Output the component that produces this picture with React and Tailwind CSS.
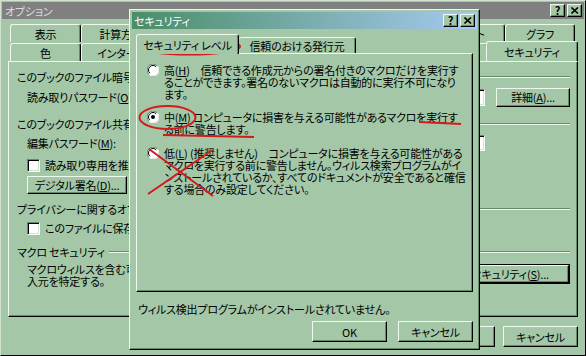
const raised =
  "border border-t-[#eef8ee] border-l-[#eef8ee] border-r-black border-b-black shadow-[inset_-1px_-1px_0_#688a6c]";
const sunken =
  "border border-t-[#688a6c] border-l-[#688a6c] border-r-white border-b-white shadow-[inset_1px_1px_0_#000,inset_-1px_-1px_0_#cfe3cf] bg-white";

const Btn = ({ className = "", children }) => (
  <div className={`${raised} bg-[#a3c7a7] flex items-center justify-center ${className}`}>{children}</div>
);

const Etched = ({ className = "" }) => (
  <div className={`h-[2px] border-t border-t-[#688a6c] border-b border-b-[#eef8ee] ${className}`} />
);

const Header = ({ children }) => (
  <div className="flex items-center h-[14px]">
    <span className="whitespace-nowrap pr-[4px]">{children}</span>
    <Etched className="flex-1" />
  </div>
);

const Check = () => <div className={`${sunken} w-[13px] h-[13px] shrink-0`} />;

const Radio = ({ checked }) => (
  <svg width="12" height="12" viewBox="0 0 12 12" className="shrink-0">
    <circle cx="6" cy="6" r="5.5" fill="white" />
    <path d="M1.8 10.2 A5.6 5.6 0 0 1 10.2 1.8" stroke="#688a6c" fill="none" />
    <path d="M2.8 9.2 A4.5 4.5 0 0 1 9.2 2.8" stroke="#000" fill="none" />
    <path d="M10.4 2.2 A5.6 5.6 0 0 1 2.2 10.4" stroke="#fff" fill="none" />
    {checked && <circle cx="6" cy="6" r="2" fill="black" />}
  </svg>
);

const Caption = () => (
  <div className="flex gap-[2px]">
    <Btn className="w-[15px] h-[13px] text-[11px] font-bold leading-none">?</Btn>
    <Btn className="w-[15px] h-[13px]">
      <svg width="8" height="7" viewBox="0 0 8 7">
        <path d="M0.5 0.5 L7 6.5 M7 0.5 L0.5 6.5" stroke="black" strokeWidth="1.6" />
      </svg>
    </Btn>
  </div>
);

const BackTab = ({ w, children, sel }) => (
  <div
    className={`flex items-center justify-center whitespace-nowrap overflow-hidden border-t border-l border-t-[#eef8ee] border-l-[#eef8ee] border-r border-r-black rounded-t-[3px] shadow-[inset_-1px_0_0_#688a6c] ${
      sel ? "h-[20px] -mx-[2px] relative z-10 bg-[#a3c7a7]" : "h-[18px]"
    }`}
    style={{ width: w }}
  >
    {children}
  </div>
);

export default function App() {
  return (
    <div className="relative w-[586px] h-[356px] overflow-hidden bg-[#a3c7a7] text-black text-[11px] leading-[12px] tracking-[-0.2px] font-['Noto_Sans_CJK_JP','Noto_Sans',sans-serif] [font-feature-settings:'palt'] border border-t-[#cfe3cf] border-l-[#cfe3cf] border-r-black border-b-black">
      {/* back window: オプション */}
      <div className="mx-[1px] mt-[1px] h-[17px] bg-[#808080] flex items-center justify-between pl-[3px] pr-[2px]">
        <span className="text-[#dcdcdc]">オプション</span>
        <Caption />
      </div>

      <div className="pl-[9px] mt-[5px] flex items-end">
        <BackTab w={71}>表示</BackTab>
        <BackTab w={80}>計算方法</BackTab>
        <BackTab w={70}>編集</BackTab>
        <BackTab w={70}>全般</BackTab>
        <BackTab w={73}>移行</BackTab>
        <BackTab w={131}>ユーザー設定リスト</BackTab>
        <BackTab w={70}>グラフ</BackTab>
      </div>
      <div className="pl-[9px] flex items-end h-[19px]">
        <BackTab w={71}>色</BackTab>
        <BackTab w={120}>インターナショナル</BackTab>
        <BackTab w={70}>保存</BackTab>
        <BackTab w={105}>エラー チェック</BackTab>
        <BackTab w={112}>スペル チェック</BackTab>
        <BackTab w={92} sel>
          セキュリティ
        </BackTab>
      </div>

      <div className={`mx-[7px] h-[256px] ${raised} pt-[8px] pl-[8px] pr-[7px] flex flex-col`}>
        <Header>このブックのファイル暗号化の設定</Header>
        <div className="mt-[3px] h-[20px] flex items-center">
          <span className="pl-[10px] whitespace-nowrap">
            読み取りパスワード(<u>O</u>):
          </span>
          <div className="flex-1" />
          <div className={`${sunken} w-[150px] h-[17px]`} />
          <Btn className="ml-[11px] w-[74px] h-[19px]">
            詳細(<u>A</u>)...
          </Btn>
        </div>
        <div className="mt-[10px]">
          <Header>このブックのファイル共有設定</Header>
        </div>
        <div className="mt-[3px] h-[18px] flex items-center">
          <span className="pl-[10px] whitespace-nowrap">
            編集パスワード(<u>M</u>):
          </span>
          <div className="flex-1" />
          <div className={`${sunken} w-[150px] h-[16px] mr-[85px]`} />
        </div>
        <div className="mt-[6px] h-[14px] flex items-center pl-[10px] gap-[5px]">
          <Check />
          <span className="whitespace-nowrap">
            読み取り専用を推奨する(<u>E</u>)
          </span>
        </div>
        <div className="mt-[4px] pl-[10px]">
          <Btn className="w-[100px] h-[18px] whitespace-nowrap">
            デジタル署名(<u>D</u>)...
          </Btn>
        </div>
        <div className="mt-[8px]">
          <Header>プライバシーに関するオプション</Header>
        </div>
        <div className="mt-[5px] h-[14px] flex items-center pl-[10px] gap-[5px]">
          <Check />
          <span className="whitespace-nowrap">
            このファイルに保存するときに個人情報を削除する(<u>R</u>)
          </span>
        </div>
        <div className="mt-[10px]">
          <Header>マクロ セキュリティ</Header>
        </div>
        <div className="mt-[4px] flex items-start">
          <div className="pl-[10px] flex-1 whitespace-nowrap">
            <div className="h-[12px]">マクロウィルスを含む可能性のあるファイルの</div>
            <div className="h-[12px]">入元を特定する。</div>
          </div>
          <div className="border border-black mt-[1px]">
            <Btn className="w-[150px] h-[18px] whitespace-nowrap">
              マクロ セキュリティ(<u>S</u>)...
            </Btn>
          </div>
        </div>
      </div>

      <div className="mt-[9px] flex justify-end gap-[8px] pr-[7px]">
        <Btn className="w-[75px] h-[21px]">OK</Btn>
        <Btn className="w-[75px] h-[21px]">キャンセル</Btn>
      </div>

      {/* front dialog: セキュリティ */}
      <div className={`absolute left-[128px] top-[8px] w-[351px] h-[341px] bg-[#a3c7a7] ${raised} p-[2px] flex flex-col`}>
        <div className="h-[17px] bg-gradient-to-r from-[#4a8d68] to-[#a6caf0] flex items-center justify-between pl-[2px] pr-[2px]">
          <span className="text-white">セキュリティ</span>
          <Caption />
        </div>

        <div className="px-[4px] flex flex-col">
          <div className="mt-[5px] flex items-end">
            <div className="relative z-10 w-[103px] h-[20px] flex items-center justify-center border-t border-l border-t-[#eef8ee] border-l-[#eef8ee] border-r border-r-black rounded-t-[3px] shadow-[inset_-1px_0_0_#688a6c] bg-[#a3c7a7] whitespace-nowrap">
              セキュリティ レベル
            </div>
            <div className="w-[117px] h-[17px] flex items-center justify-center border-t border-t-[#eef8ee] border-r border-r-black rounded-t-[3px] shadow-[inset_-1px_0_0_#688a6c] whitespace-nowrap">
              信頼のおける発行元
            </div>
          </div>
          <div className={`-mt-[1px] h-[239px] ${raised} pt-[10px] pl-[10px] flex flex-col whitespace-nowrap`}>
            <div className="flex gap-[5px]">
              <Radio />
              <div>
                <div className="h-[12px]">
                  高(<u>H</u>)　信頼できる作成元からの署名付きのマクロだけを実行す
                </div>
                <div className="h-[12px]">ることができます。署名のないマクロは自動的に実行不可になり</div>
                <div className="h-[12px]">ます。</div>
              </div>
            </div>
            <div className="mt-[11px] flex gap-[5px]">
              <Radio checked />
              <div>
                <div className="h-[12px]">
                  中(<u>M</u>) コンピュータに損害を与える可能性があるマクロを実行す
                </div>
                <div className="h-[12px]">る前に警告します。</div>
              </div>
            </div>
            <div className="mt-[12px] flex gap-[5px]">
              <Radio />
              <div>
                <div className="h-[12px]">
                  低(<u>L</u>) (推奨しません)　コンピュータに損害を与える可能性がある
                </div>
                <div className="h-[12px]">マクロを実行する前に警告しません。ウィルス検索プログラムがイ</div>
                <div className="h-[12px]">ンストールされているか、すべてのドキュメントが安全であると確信</div>
                <div className="h-[12px]">する場合のみ設定してください。</div>
              </div>
            </div>
          </div>
          <div className="mt-[11px] h-[12px] pl-[2px] whitespace-nowrap">
            ウィルス検出プログラムがインストールされていません。
          </div>
          <div className="mt-[6px] flex justify-end gap-[11px]">
            <Btn className="w-[75px] h-[21px]">OK</Btn>
            <Btn className="w-[75px] h-[21px]">キャンセル</Btn>
          </div>
        </div>
      </div>

      {/* red marks drawn over the screenshot */}
      <svg className="absolute inset-0 pointer-events-none" width="586" height="356">
        <g stroke="#d41a1a" strokeWidth="2" fill="none">
          <ellipse cx="188" cy="45.5" rx="51" ry="8" />
          <ellipse cx="166.5" cy="116.5" rx="28" ry="11.5" />
          <path d="M418 121 L460 123" />
          <path d="M162 134 L253 136" />
          <path d="M148 148 L212 195" />
          <path d="M210 150 L147 193" />
        </g>
      </svg>
    </div>
  );
}
